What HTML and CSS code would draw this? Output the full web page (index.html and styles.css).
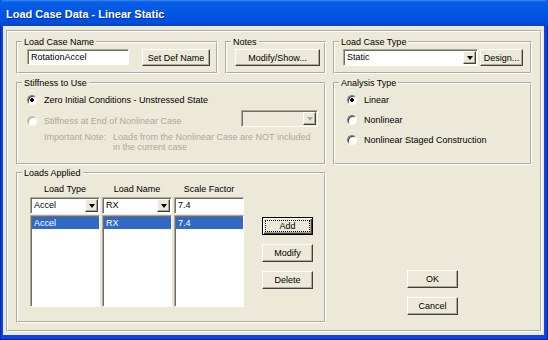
FILE: index.html
```html
<!DOCTYPE html>
<html lang="en">
<head>
    <title>Load Case Data - Linear Static</title>
    <meta charset="utf-8" />
    <link rel="stylesheet" href="styles.css">
</head>

<body>

<div class="win">
    <div class="cap">Load Case Data - Linear Static</div>
    <div class="client">
        <div class="frame">
            <div class="lay">

                <div class="r1">
                    <fieldset class="grp g-name">
                        <legend>Load Case Name</legend>
                        <div class="in row">
                            <div class="edit e-name">RotationAccel</div>
                            <button class="btn b-def">Set Def Name</button>
                        </div>
                    </fieldset>
                    <fieldset class="grp g-notes">
                        <legend>Notes</legend>
                        <div class="in"><button class="btn b-notes">Modify/Show...</button></div>
                    </fieldset>
                </div>

                <fieldset class="grp g-type">
                    <legend>Load Case Type</legend>
                    <div class="in row">
                        <div class="combo c-type"><span class="val">Static</span><span class="drop"></span></div>
                        <button class="btn b-design">Design...</button>
                    </div>
                </fieldset>

                <fieldset class="grp g-stiff">
                    <legend>Stiffness to Use</legend>
                    <div class="in">
                        <div class="opt"><span class="radio on"></span>Zero Initial Conditions - Unstressed State</div>
                        <div class="row s-row">
                            <div class="opt dis"><span class="radio"></span>Stiffness at End of Nonlinear Case</div>
                            <div class="combo dis c-nl"><span class="val"></span><span class="drop"></span></div>
                        </div>
                        <div class="note">
                            <span>Important Note:</span>
                            <span>Loads from the Nonlinear Case are NOT included<br>in the current case</span>
                        </div>
                    </div>
                </fieldset>

                <fieldset class="grp g-an">
                    <legend>Analysis Type</legend>
                    <div class="in">
                        <div class="opt"><span class="radio on"></span>Linear</div>
                        <div class="opt"><span class="radio"></span>Nonlinear</div>
                        <div class="opt"><span class="radio"></span>Nonlinear Staged Construction</div>
                    </div>
                </fieldset>

                <fieldset class="grp g-loads">
                    <legend>Loads Applied</legend>
                    <div class="in row">
                        <div class="cols">
                            <div class="col">
                                <div class="hd">Load Type</div>
                                <div class="combo"><span class="val">Accel</span><span class="drop"></span></div>
                                <div class="list"><div class="sel">Accel</div></div>
                            </div>
                            <div class="col">
                                <div class="hd">Load Name</div>
                                <div class="combo"><span class="val">RX</span><span class="drop"></span></div>
                                <div class="list"><div class="sel">RX</div></div>
                            </div>
                            <div class="col">
                                <div class="hd">Scale Factor</div>
                                <div class="edit e-sf">7.4</div>
                                <div class="list"><div class="sel">7.4</div></div>
                            </div>
                        </div>
                        <div class="btns">
                            <button class="btn b-sm def">Add</button>
                            <button class="btn b-sm">Modify</button>
                            <button class="btn b-sm">Delete</button>
                        </div>
                    </div>
                </fieldset>

                <div class="okc">
                    <button class="btn b-sm">OK</button>
                    <button class="btn b-sm">Cancel</button>
                </div>

            </div>
        </div>
    </div>
</div>

</body>
</html>
```

FILE: styles.css
```css
*{margin:0;padding:0;box-sizing:border-box;}
html,body{width:100%;height:100%;overflow:hidden;background:#0842d6;}
body{font:9px/12px "Liberation Sans",Arial,sans-serif;color:#000;}

/* window chrome */
.win{width:548px;height:340px;display:flex;flex-direction:column;background:#0846dc;box-shadow:inset 1px 0 0 #0027b8,inset -1px 0 0 #0019a8,inset 0 -1px 0 #0019a8;border-radius:3px 3px 0 0;overflow:hidden;}
.cap{height:26px;padding:2px 0 0 6px;line-height:24px;font:bold 11px/24px "Liberation Sans",Arial,sans-serif;color:#fff;text-shadow:1px 1px 0 #0b2a9c;
    background:linear-gradient(to bottom,#3d8bf7 0,#0a5fe6 2px,#0256e4 45%,#0050de 80%,#0146cf 100%);}
.client{flex:1;margin:0 4px 5px 3px;background:#ece9d8;padding:4px 2px 3px 3px;display:flex;}
.frame{flex:1;border:2px groove #fff;padding:4px 0 0 8px;}

/* layout */
.lay{display:grid;grid-template-columns:310px 199px;grid-template-rows:39px 88px 156px;column-gap:7px;row-gap:2px;}
.r1{display:flex;gap:7px;align-items:flex-start;}
.row{display:flex;align-items:flex-start;}

/* group boxes */
.grp{border:2px groove #fff;min-width:0;}
.grp legend{margin-left:4px;padding:0 2px;line-height:12px;}
.g-name{width:202px;height:38px;}
.g-notes{width:101px;height:38px;}
.g-type{height:38px;}

.g-name .in{padding:1px 0 0 9px;}
.g-notes .in{padding:1px 0 0 8px;}
.g-type .in{padding:1px 0 0 8px;gap:2px;}

/* controls */
.btn{height:17px;font:9px "Liberation Sans",Arial,sans-serif;color:#000;background:#ece9d8;border:1px solid;border-color:#fff #404040 #404040 #fff;box-shadow:inset -1px -1px 0 #aca899;text-align:center;}
.b-def{width:68px;margin-left:13px;}
.b-notes{width:85px;}
.b-design{width:43px;}
.b-sm{width:51px;height:18px;}
.def{border-color:#000;box-shadow:inset 1px 1px 0 #fff,inset -1px -1px 0 #404040,inset -2px -2px 0 #aca899;outline:1px dotted #000;outline-offset:-4px;}

.edit{height:16px;background:#fff;border:1px solid;border-color:#aca899 #fff #fff #aca899;box-shadow:inset 1px 1px 0 #716f64;padding-left:3px;line-height:14px;}
.e-name{width:102px;}
.e-sf{height:17px;line-height:15px;}

.combo{height:17px;display:flex;background:#fff;border:1px solid;border-color:#aca899 #fff #fff #aca899;box-shadow:inset 1px 1px 0 #716f64;padding:1px 1px 1px 0;}
.combo .val{flex:1;padding-left:3px;line-height:13px;}
.combo .drop{width:13px;height:13px;display:flex;align-items:center;justify-content:center;background:#ece9d8;border:1px solid;border-color:#fff #404040 #404040 #fff;box-shadow:inset -1px -1px 0 #aca899;}
.combo .drop:after{content:"";border-style:solid;border-color:#000 transparent transparent;border-width:4px 3.5px 0;}
.combo.dis{background:#ece9d8;}
.combo.dis .drop:after{border-top-color:#aca899;}
.c-type{width:135px;}
.c-nl{width:77px;}

.opt{display:flex;align-items:center;height:12px;white-space:nowrap;}
.radio{width:10px;height:10px;margin-right:7px;border-radius:50%;border:1px solid;border-color:#808080 #fff #fff #808080;box-shadow:inset 1px 1px 0 #404040;background:#fff;flex:none;}
.radio.on{background:radial-gradient(circle,#000 0,#000 1.6px,#fff 2.2px);}
.dis{color:#aca899;}
.opt.dis .radio{border-color:#c8c5b6 #fff #fff #c8c5b6;box-shadow:inset 1px 1px 0 #aca899;}

/* stiffness */
.g-stiff .in{padding:5px 6px 0 9px;}
.s-row{margin-top:4px;height:17px;justify-content:space-between;}
.s-row .opt{margin-top:5px;}
.note{margin-top:5px;padding-left:17px;display:grid;grid-template-columns:69px auto;line-height:10px;color:#aca899;}

/* analysis */
.g-an .in{padding:5px 0 0 12px;display:flex;flex-direction:column;gap:8px;}

/* loads */
.g-loads .in{padding:4px 0 0 12px;}
.cols{display:grid;grid-template-columns:70px 70px 70px;column-gap:2px;}
.col{display:flex;flex-direction:column;}
.hd{text-align:center;margin-bottom:2px;}
.list{height:92px;margin-top:1px;background:#fff;border:1px solid;border-color:#aca899 #fff #fff #aca899;box-shadow:inset 1px 1px 0 #716f64;padding:1px 0 0 1px;}
.sel{background:#316ac5;color:#fff;line-height:12px;padding-left:2px;}
.btns{margin-left:18px;padding-top:34px;display:flex;flex-direction:column;gap:9px;}

.okc{display:flex;flex-direction:column;align-items:center;justify-content:flex-end;gap:9px;padding-bottom:8px;}
```
